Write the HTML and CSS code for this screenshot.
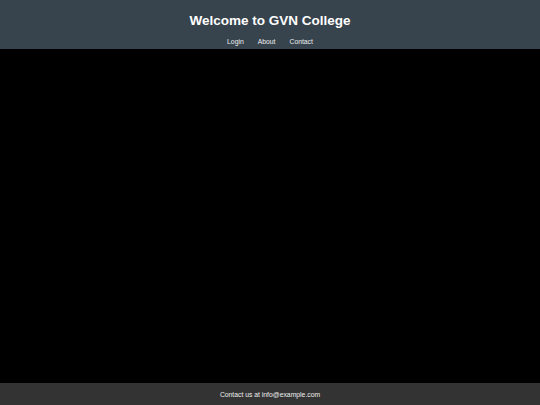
FILE: index.html
```html
<!DOCTYPE html>
<html>
<head>
<meta charset="utf-8">
<link rel="stylesheet" href="styles.css">
</head>
<body>
<div class="page">
  <header class="header">
    <h1 class="title">Welcome to GVN College</h1>
    <nav class="nav">
      <a class="nav-link" href="#">Login</a>
      <a class="nav-link" href="#">About</a>
      <a class="nav-link" href="#">Contact</a>
    </nav>
  </header>
  <main class="main"></main>
  <footer class="footer">Contact us at info@example.com</footer>
</div>
</body>
</html>
```
FILE: styles.css
```css
html, body {
  margin: 0;
  padding: 0;
  height: 100%;
  background: #000;
  font-family: "Liberation Sans", Arial, sans-serif;
}
.page {
  display: flex;
  flex-direction: column;
  height: 405px;
}
.header {
  background: #37434d;
  height: 49px;
  box-sizing: border-box;
  padding-top: 13px;
  display: flex;
  flex-direction: column;
  align-items: center;
}
.title {
  margin: 0;
  color: #fff;
  font-size: 13.5px;
  font-weight: bold;
  line-height: 16px;
}
.nav {
  margin-top: 8px;
  display: flex;
  gap: 14px;
}
.nav-link {
  color: #eee;
  text-decoration: none;
  font-size: 6.8px;
  line-height: 9px;
}
.main {
  flex: 1;
  background: #000;
}
.footer {
  background: #333;
  height: 22px;
  color: #eee;
  font-size: 6.8px;
  display: flex;
  align-items: center;
  justify-content: center;
}
```
